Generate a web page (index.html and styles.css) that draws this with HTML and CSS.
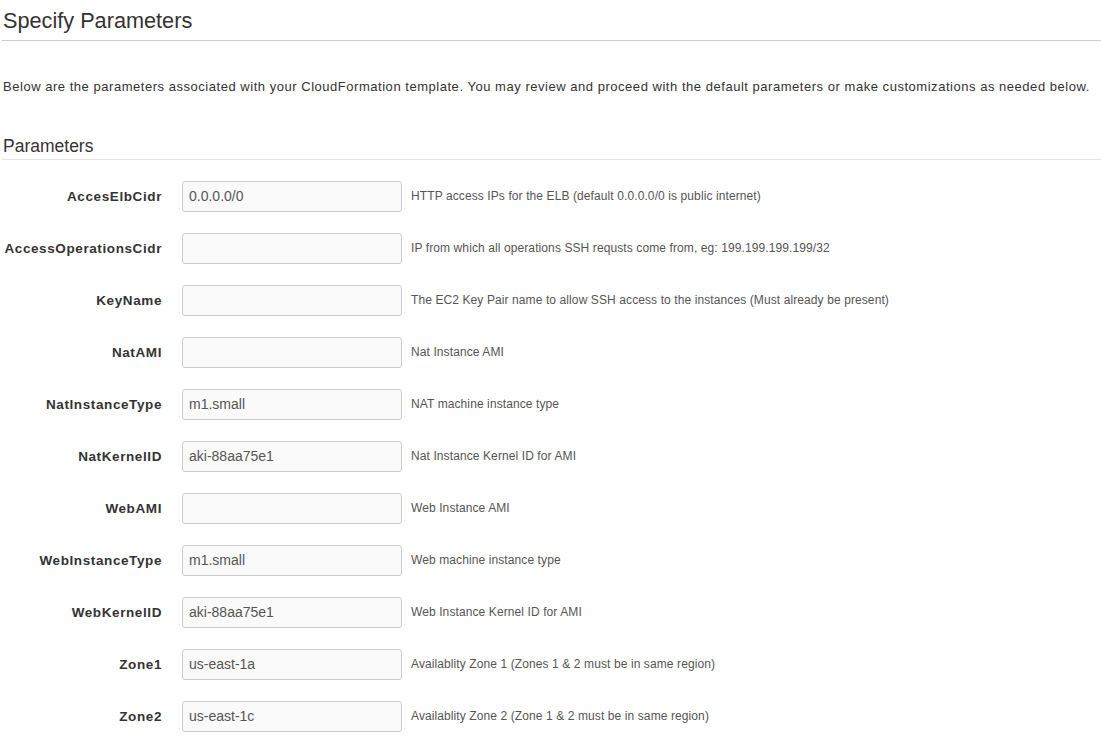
FILE: index.html
```html
<!DOCTYPE html>
<html>
<head>
<meta charset="utf-8">
<link rel="stylesheet" href="styles.css">
</head>
<body>
<div class="page">
  <h1 class="title">Specify Parameters</h1>
  <p class="intro">Below are the parameters associated with your CloudFormation template. You may review and proceed with the default parameters or make customizations as needed below.</p>
  <h2 class="section">Parameters</h2>
  <div class="rows">
    <div class="row"><label class="lbl">AccesElbCidr</label><input class="inp" type="text" value="0.0.0.0/0"><span class="help">HTTP access IPs for the ELB (default 0.0.0.0/0 is public internet)</span></div>
    <div class="row"><label class="lbl">AccessOperationsCidr</label><input class="inp" type="text" value=""><span class="help">IP from which all operations SSH requsts come from, eg: 199.199.199.199/32</span></div>
    <div class="row"><label class="lbl">KeyName</label><input class="inp" type="text" value=""><span class="help">The EC2 Key Pair name to allow SSH access to the instances (Must already be present)</span></div>
    <div class="row"><label class="lbl">NatAMI</label><input class="inp" type="text" value=""><span class="help">Nat Instance AMI</span></div>
    <div class="row"><label class="lbl">NatInstanceType</label><input class="inp" type="text" value="m1.small"><span class="help">NAT machine instance type</span></div>
    <div class="row"><label class="lbl">NatKernelID</label><input class="inp" type="text" value="aki-88aa75e1"><span class="help">Nat Instance Kernel ID for AMI</span></div>
    <div class="row"><label class="lbl">WebAMI</label><input class="inp" type="text" value=""><span class="help">Web Instance AMI</span></div>
    <div class="row"><label class="lbl">WebInstanceType</label><input class="inp" type="text" value="m1.small"><span class="help">Web machine instance type</span></div>
    <div class="row"><label class="lbl">WebKernelID</label><input class="inp" type="text" value="aki-88aa75e1"><span class="help">Web Instance Kernel ID for AMI</span></div>
    <div class="row"><label class="lbl">Zone1</label><input class="inp" type="text" value="us-east-1a"><span class="help">Availablity Zone 1 (Zones 1 &amp; 2 must be in same region)</span></div>
    <div class="row"><label class="lbl">Zone2</label><input class="inp" type="text" value="us-east-1c"><span class="help">Availablity Zone 2 (Zone 1 &amp; 2 must be in same region)</span></div>
  </div>
</div>
</body>
</html>
```

FILE: styles.css
```css
html, body {
  margin: 0;
  padding: 0;
  background: #fff;
}
body {
  font-family: "Liberation Sans", Arial, sans-serif;
  color: #333;
}
.page {
  padding: 0 0 0 2px;
}
.title {
  margin: 0;
  padding: 9px 0 0 1px;
  height: 31px;
  font-size: 21.7px;
  font-weight: normal;
  line-height: 24px;
  color: #333;
  border-bottom: 1px solid #ccc;
}
.intro {
  margin: 0;
  padding: 37px 0 0 1px;
  font-size: 13px;
  letter-spacing: 0.53px;
  line-height: 18px;
  color: #333;
}
.section {
  margin: 0;
  padding: 40px 0 0 1px;
  height: 23px;
  font-size: 17.5px;
  font-weight: normal;
  line-height: 20px;
  color: #333;
  border-bottom: 1px solid #e5e5e5;
}
.rows {
  display: flex;
  flex-direction: column;
  gap: 20px;
  padding-top: 20px;
}
.row {
  display: flex;
  align-items: center;
  height: 32px;
}
.lbl {
  width: 160px;
  text-align: right;
  font-size: 13.5px;
  letter-spacing: 0.6px;
  font-weight: bold;
  color: #333;
  padding-right: 20px;
  box-sizing: content-box;
}
.inp {
  box-sizing: border-box;
  width: 220px;
  height: 31px;
  margin: 0;
  padding: 0 6px;
  border: 1px solid #ccc;
  border-radius: 3px;
  background: #fafafa;
  font-family: "Liberation Sans", Arial, sans-serif;
  font-size: 14px;
  color: #555;
  outline: none;
}
.help {
  margin-left: 9px;
  font-size: 12px;
  letter-spacing: 0.1px;
  color: #555;
}
```
